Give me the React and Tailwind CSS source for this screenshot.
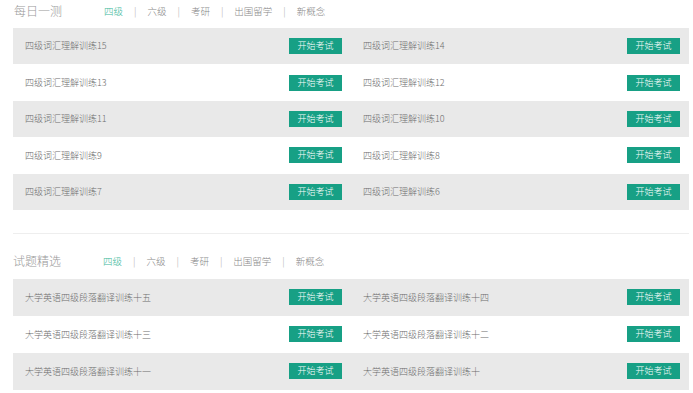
const tabs = ["四级", "六级", "考研", "出国留学", "新概念"];

const daily = [
  ["四级词汇理解训练15", "四级词汇理解训练14"],
  ["四级词汇理解训练13", "四级词汇理解训练12"],
  ["四级词汇理解训练11", "四级词汇理解训练10"],
  ["四级词汇理解训练9", "四级词汇理解训练8"],
  ["四级词汇理解训练7", "四级词汇理解训练6"],
];

const picked = [
  ["大学英语四级段落翻译训练十五", "大学英语四级段落翻译训练十四"],
  ["大学英语四级段落翻译训练十三", "大学英语四级段落翻译训练十二"],
  ["大学英语四级段落翻译训练十一", "大学英语四级段落翻译训练十"],
];

const Header = ({ title, className }) => (
  <div className={"flex items-center " + className}>
    <span className="w-[90px] text-[12px] font-light text-[#999]">{title}</span>
    <div className="flex items-center text-[9.5px] font-light text-[#888]">
      {tabs.map((t, i) => (
        <div key={t} className="flex items-center">
          {i > 0 && <span className="mx-[11px] text-[#aaa]">|</span>}
          <span className={i === 0 ? "text-[#3cb89a]" : ""}>{t}</span>
        </div>
      ))}
    </div>
  </div>
);

const Cell = ({ label }) => (
  <div className="flex flex-1 items-center justify-between pl-3 pr-[9px]">
    <span className="text-[9px] font-light text-[#6e6e6e]">{label}</span>
    <button className="h-[16px] w-[53px] bg-[#17a085] text-[9px] font-light leading-[16px] text-white">
      开始考试
    </button>
  </div>
);

const Rows = ({ data, rowH }) => (
  <div className="flex flex-col">
    {data.map((pair, i) => (
      <div
        key={i}
        className={"flex " + rowH + (i % 2 === 0 ? " bg-[#e9e9e9]" : " bg-white")}
      >
        <Cell label={pair[0]} />
        <Cell label={pair[1]} />
      </div>
    ))}
  </div>
);

export default function App() {
  return (
    <div
      className="h-[393px] w-[693px] overflow-hidden bg-white pl-[13px] pr-[4px]"
      style={{ fontFamily: '"Noto Sans CJK SC", "Liberation Sans", sans-serif' }}
    >
      <Header title="每日一测" className="h-[22px] pl-px" />
      <div className="mt-[6px]">
        <Rows data={daily} rowH="h-[36.4px]" />
      </div>
      <div className="mt-[23px] border-t border-[#eeeeee]" />
      <Header title="试题精选" className="mt-[19px] h-[16px]" />
      <div className="mt-[10px]">
        <Rows data={picked} rowH="h-[37px]" />
      </div>
    </div>
  );
}
